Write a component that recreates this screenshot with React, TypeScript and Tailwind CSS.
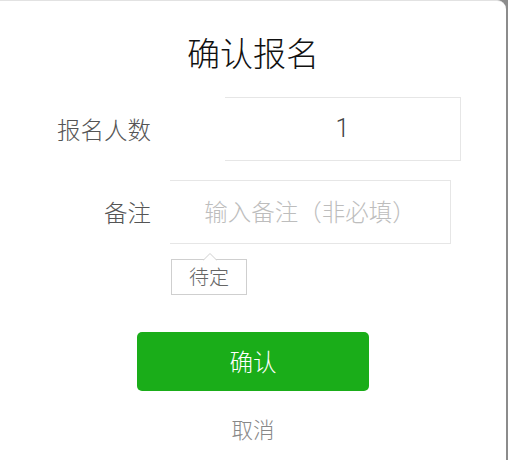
import React from "react";

export default function App() {
  const font = { fontFamily: '"Noto Sans CJK SC", "Noto Sans", sans-serif' };
  return (
    <div className="w-[508px] h-[460px] flex bg-[#8c8c8c] overflow-hidden font-light" style={font}>
      <div className="w-[506px] h-[460px] bg-white rounded-tr-[9px] border-t border-[#e2e2e2] flex flex-col">
        <div className="mt-[32px] h-[38px] leading-[38px] text-center text-[33px] text-[#111]">确认报名</div>

        <div className="mt-[26px] flex items-center">
          <div className="w-[151px] text-right text-[23.5px] leading-[30px] text-[#555]">报名人数</div>
          <div className="ml-[74px] w-[236px] h-[64px] border-t border-r border-b border-[#e6e6e6] flex items-center justify-center text-[25px] text-[#444] font-[Roboto,sans-serif] font-light">
            1
          </div>
        </div>

        <div className="mt-[19px] flex items-center">
          <div className="w-[151px] text-right text-[23.5px] leading-[30px] text-[#555]">备注</div>
          <div className="ml-[19px] w-[281px] h-[64px] border-t border-r border-b border-[#e6e6e6] flex items-center justify-center text-[23.5px] text-[#bdbdbd]">
            输入备注（非必填）
          </div>
        </div>

        <div className="mt-[15px] ml-[171px] relative w-[76px] h-[36px] border border-[#cfcfcf] flex items-center justify-center text-[20px] text-[#666]">
          待定
          <svg className="absolute -top-[7px] left-[31px]" width="14" height="8" viewBox="0 0 14 8">
            <path d="M0 7.5 L7 0.5 L14 7.5" fill="white" stroke="#cfcfcf" strokeWidth="1" />
          </svg>
        </div>

        <div className="mt-[37px] ml-[137px] w-[232px] h-[59px] bg-[#1aad19] rounded-[5px] flex items-center justify-center text-[23.5px] text-white">
          确认
        </div>

        <div className="mt-[23px] text-center text-[21.5px] leading-[30px] text-[#888]">取消</div>
      </div>
    </div>
  );
}
